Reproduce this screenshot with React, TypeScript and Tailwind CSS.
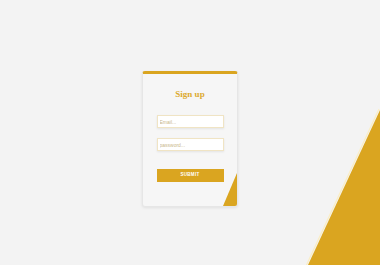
export default function App() {
  return (
    <div className="relative w-[380px] h-[265px] overflow-hidden bg-[#f3f3f3] font-['Liberation_Sans',sans-serif]">
      {/* Decorative corner triangle */}
      <svg
        className="absolute right-0 bottom-0"
        width="80"
        height="160"
        viewBox="0 0 80 160"
      >
        <polygon points="80,5 8,160 80,160" fill="#daa520" />
        <line x1="79" y1="4" x2="6.5" y2="160" stroke="#fbeec4" strokeWidth="1.2" />
      </svg>

      <div className="relative flex justify-center pt-[71px]">
        <div className="relative w-[96px] h-[136px] bg-[#f6f6f6] border border-[#e6e6e6] border-t-[3px] border-t-[#daa520] rounded-[3px] shadow-[0_1px_3px_rgba(0,0,0,0.08)] flex flex-col items-center overflow-hidden">
          <h1 className="mt-[14px] h-[12px] leading-[12px] text-[9px] font-bold text-[#dcaa30] font-['Liberation_Serif',serif]">
            Sign up
          </h1>
          <input
            type="text"
            placeholder="Email..."
            className="mt-[15px] w-[67px] h-[13px] px-[2px] bg-white border border-[#f0e4c4] shadow-[0_1px_2px_rgba(0,0,0,0.08)] text-[5px] placeholder:text-[#c9b78a] outline-none"
          />
          <input
            type="password"
            placeholder="password..."
            className="mt-[10px] w-[67px] h-[13px] px-[2px] bg-white border border-[#f0e4c4] shadow-[0_1px_2px_rgba(0,0,0,0.08)] text-[5px] placeholder:text-[#c9b78a] outline-none"
          />
          <button className="mt-[18px] w-[67px] h-[13px] bg-[#daa520] text-white text-[4.5px] font-bold tracking-[0.3px] leading-none">
            SUBMIT
          </button>

          {/* Card corner accent */}
          <svg
            className="absolute right-0 bottom-0"
            width="14"
            height="33"
            viewBox="0 0 14 33"
          >
            <polygon points="14,0 14,33 0,33" fill="#daa520" />
          </svg>
        </div>
      </div>
    </div>
  )
}
